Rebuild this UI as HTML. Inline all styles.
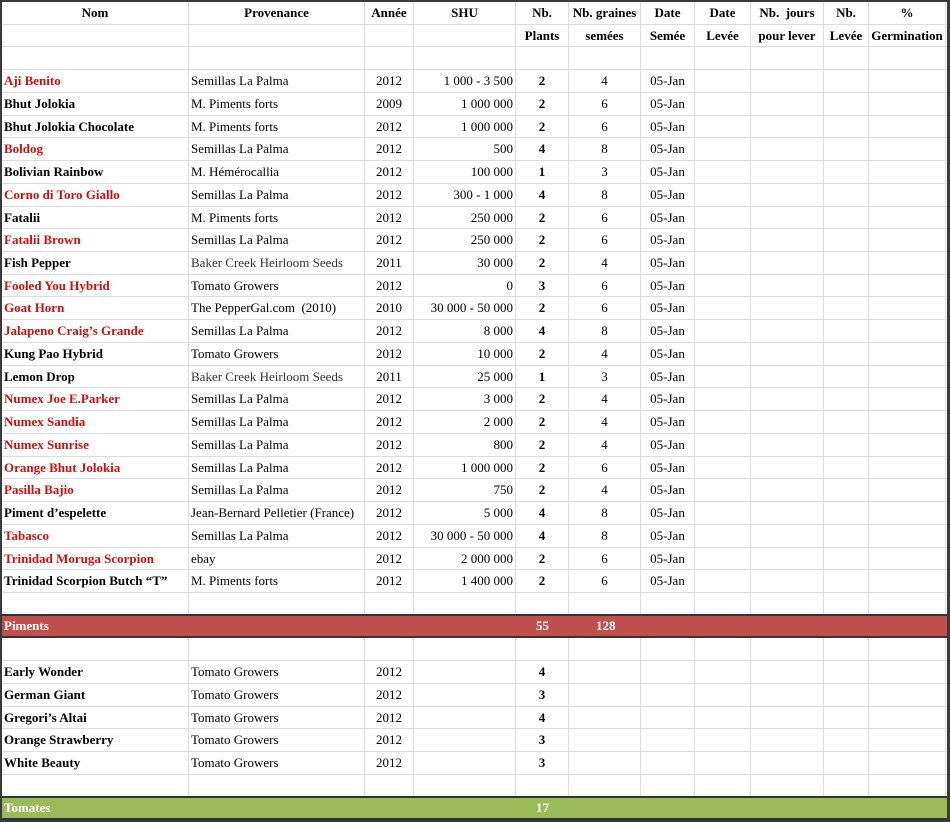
<!DOCTYPE html>
<html><head><meta charset="utf-8"><style>
*{margin:0;padding:0;box-sizing:border-box}
body{width:950px;height:822px;background:#fff;position:relative;overflow:hidden;font-family:"Liberation Serif",serif;font-size:13px;color:#000}
#frame{position:absolute;left:0;top:0;width:950px;height:822px;border:2px solid #3a3a3a;border-right-width:3px}
.r{position:absolute;left:2px;width:945px;height:22.73px;display:flex;border-bottom:1px solid #dcdcdc}
.r>div{height:100%;border-right:1px solid #dcdcdc;line-height:22px;white-space:nowrap;overflow:hidden;padding:0 2px}
.c0{width:187px;font-weight:bold}.c1{width:176px;padding-left:2px!important}.c2{width:49px;text-align:center}.c3{width:102px;text-align:right}
.c4{width:53px;text-align:center;font-weight:bold}.c5{width:72px;text-align:center}.c6{width:54px;text-align:center}
.c7{width:56px}.c8{width:73px}.c9{width:45px}.c10{width:77px}
.h>div{text-align:center;font-weight:bold}
.red .c0{color:#d01010}
.g{color:#333}
.bar{position:absolute;left:2px;width:945px;height:24px;border-top:2px solid #333;border-bottom:2px solid #333;color:#fff;font-weight:bold;line-height:20px}
.bar span{position:absolute}
</style></head><body>
<div id="frame"></div>
<div class="r h" style="top:2px"><div class="c0">Nom</div><div class="c1" style="text-align:center">Provenance</div><div class="c2">Année</div><div class="c3" style="text-align:center">SHU</div><div class="c4">Nb.</div><div class="c5">Nb. graines</div><div class="c6">Date</div><div class="c7">Date</div><div class="c8">Nb.&nbsp; jours</div><div class="c9">Nb.</div><div class="c10">%</div></div>
<div class="r h" style="top:24.7px"><div class="c0"></div><div class="c1"></div><div class="c2"></div><div class="c3"></div><div class="c4">Plants</div><div class="c5">semées</div><div class="c6">Semée</div><div class="c7">Levée</div><div class="c8">pour lever</div><div class="c9">Levée</div><div class="c10" style="padding:0">Germination</div></div>
<div id="rows"></div>
<div class="bar" style="top:614px;background:#c0504d"><span style="left:2px">Piments</span><span style="left:534px">55</span><span style="left:594px">128</span></div>
<div class="bar" style="top:796px;background:#9bbb59"><span style="left:2px">Tomates</span><span style="left:534px">17</span></div>
<script>
var d=[
["Aji Benito",1,"Semillas La Palma","2012","1 000 - 3 500","2","4"],
["Bhut Jolokia",0,"M. Piments forts","2009","1 000 000","2","6"],
["Bhut Jolokia Chocolate",0,"M. Piments forts","2012","1 000 000","2","6"],
["Boldog",1,"Semillas La Palma","2012","500","4","8"],
["Bolivian Rainbow",0,"M. Hémérocallia","2012","100 000","1","3"],
["Corno di Toro Giallo",1,"Semillas La Palma","2012","300 - 1 000","4","8"],
["Fatalii",0,"M. Piments forts","2012","250 000","2","6"],
["Fatalii Brown",1,"Semillas La Palma","2012","250 000","2","6"],
["Fish Pepper",0,"<span class=g>Baker Creek Heirloom Seeds</span>","2011","30 000","2","4"],
["Fooled You Hybrid",1,"Tomato Growers","2012","0","3","6"],
["Goat Horn",1,"The PepperGal.com&nbsp; (2010)","2010","30 000 - 50 000","2","6"],
["Jalapeno Craig’s Grande",1,"Semillas La Palma","2012","8 000","4","8"],
["Kung Pao Hybrid",0,"Tomato Growers","2012","10 000","2","4"],
["Lemon Drop",0,"<span class=g>Baker Creek Heirloom Seeds</span>","2011","25 000","1","3"],
["Numex Joe E.Parker",1,"Semillas La Palma","2012","3 000","2","4"],
["Numex Sandia",1,"Semillas La Palma","2012","2 000","2","4"],
["Numex Sunrise",1,"Semillas La Palma","2012","800","2","4"],
["Orange Bhut Jolokia",1,"Semillas La Palma","2012","1 000 000","2","6"],
["Pasilla Bajio",1,"Semillas La Palma","2012","750","2","4"],
["Piment d’espelette",0,"Jean-Bernard Pelletier (France)","2012","5 000","4","8"],
["Tabasco",1,"Semillas La Palma","2012","30 000 - 50 000","4","8"],
["Trinidad Moruga Scorpion",1,"ebay","2012","2 000 000","2","6"],
["Trinidad Scorpion Butch “T”",0,"M. Piments forts","2012","1 400 000","2","6"]];
var t=[["Early Wonder","4"],["German Giant","3"],["Gregori’s Altai","4"],["Orange Strawberry","3"],["White Beauty","3"]];
var H=22.73,h="";
function row(i,a,red){a=a||[];var s='<div class="r'+(red?' red':'')+'" style="top:'+(2+i*H)+'px">';
for(var k=0;k<11;k++){s+='<div class="c'+k+'">'+(a[k]||'')+'</div>';}return s+'</div>';}
h+=row(2);
d.forEach(function(r,i){h+=row(3+i,[r[0],r[2],r[3],r[4],r[5],r[6],r[6]?"05-Jan":""],r[1]);});
h+=row(26);h+=row(28);
t.forEach(function(r,i){h+=row(29+i,[r[0],"Tomato Growers","2012","",r[1]]);});
h+=row(34);
document.getElementById("rows").innerHTML=h;
</script>
</body></html>
